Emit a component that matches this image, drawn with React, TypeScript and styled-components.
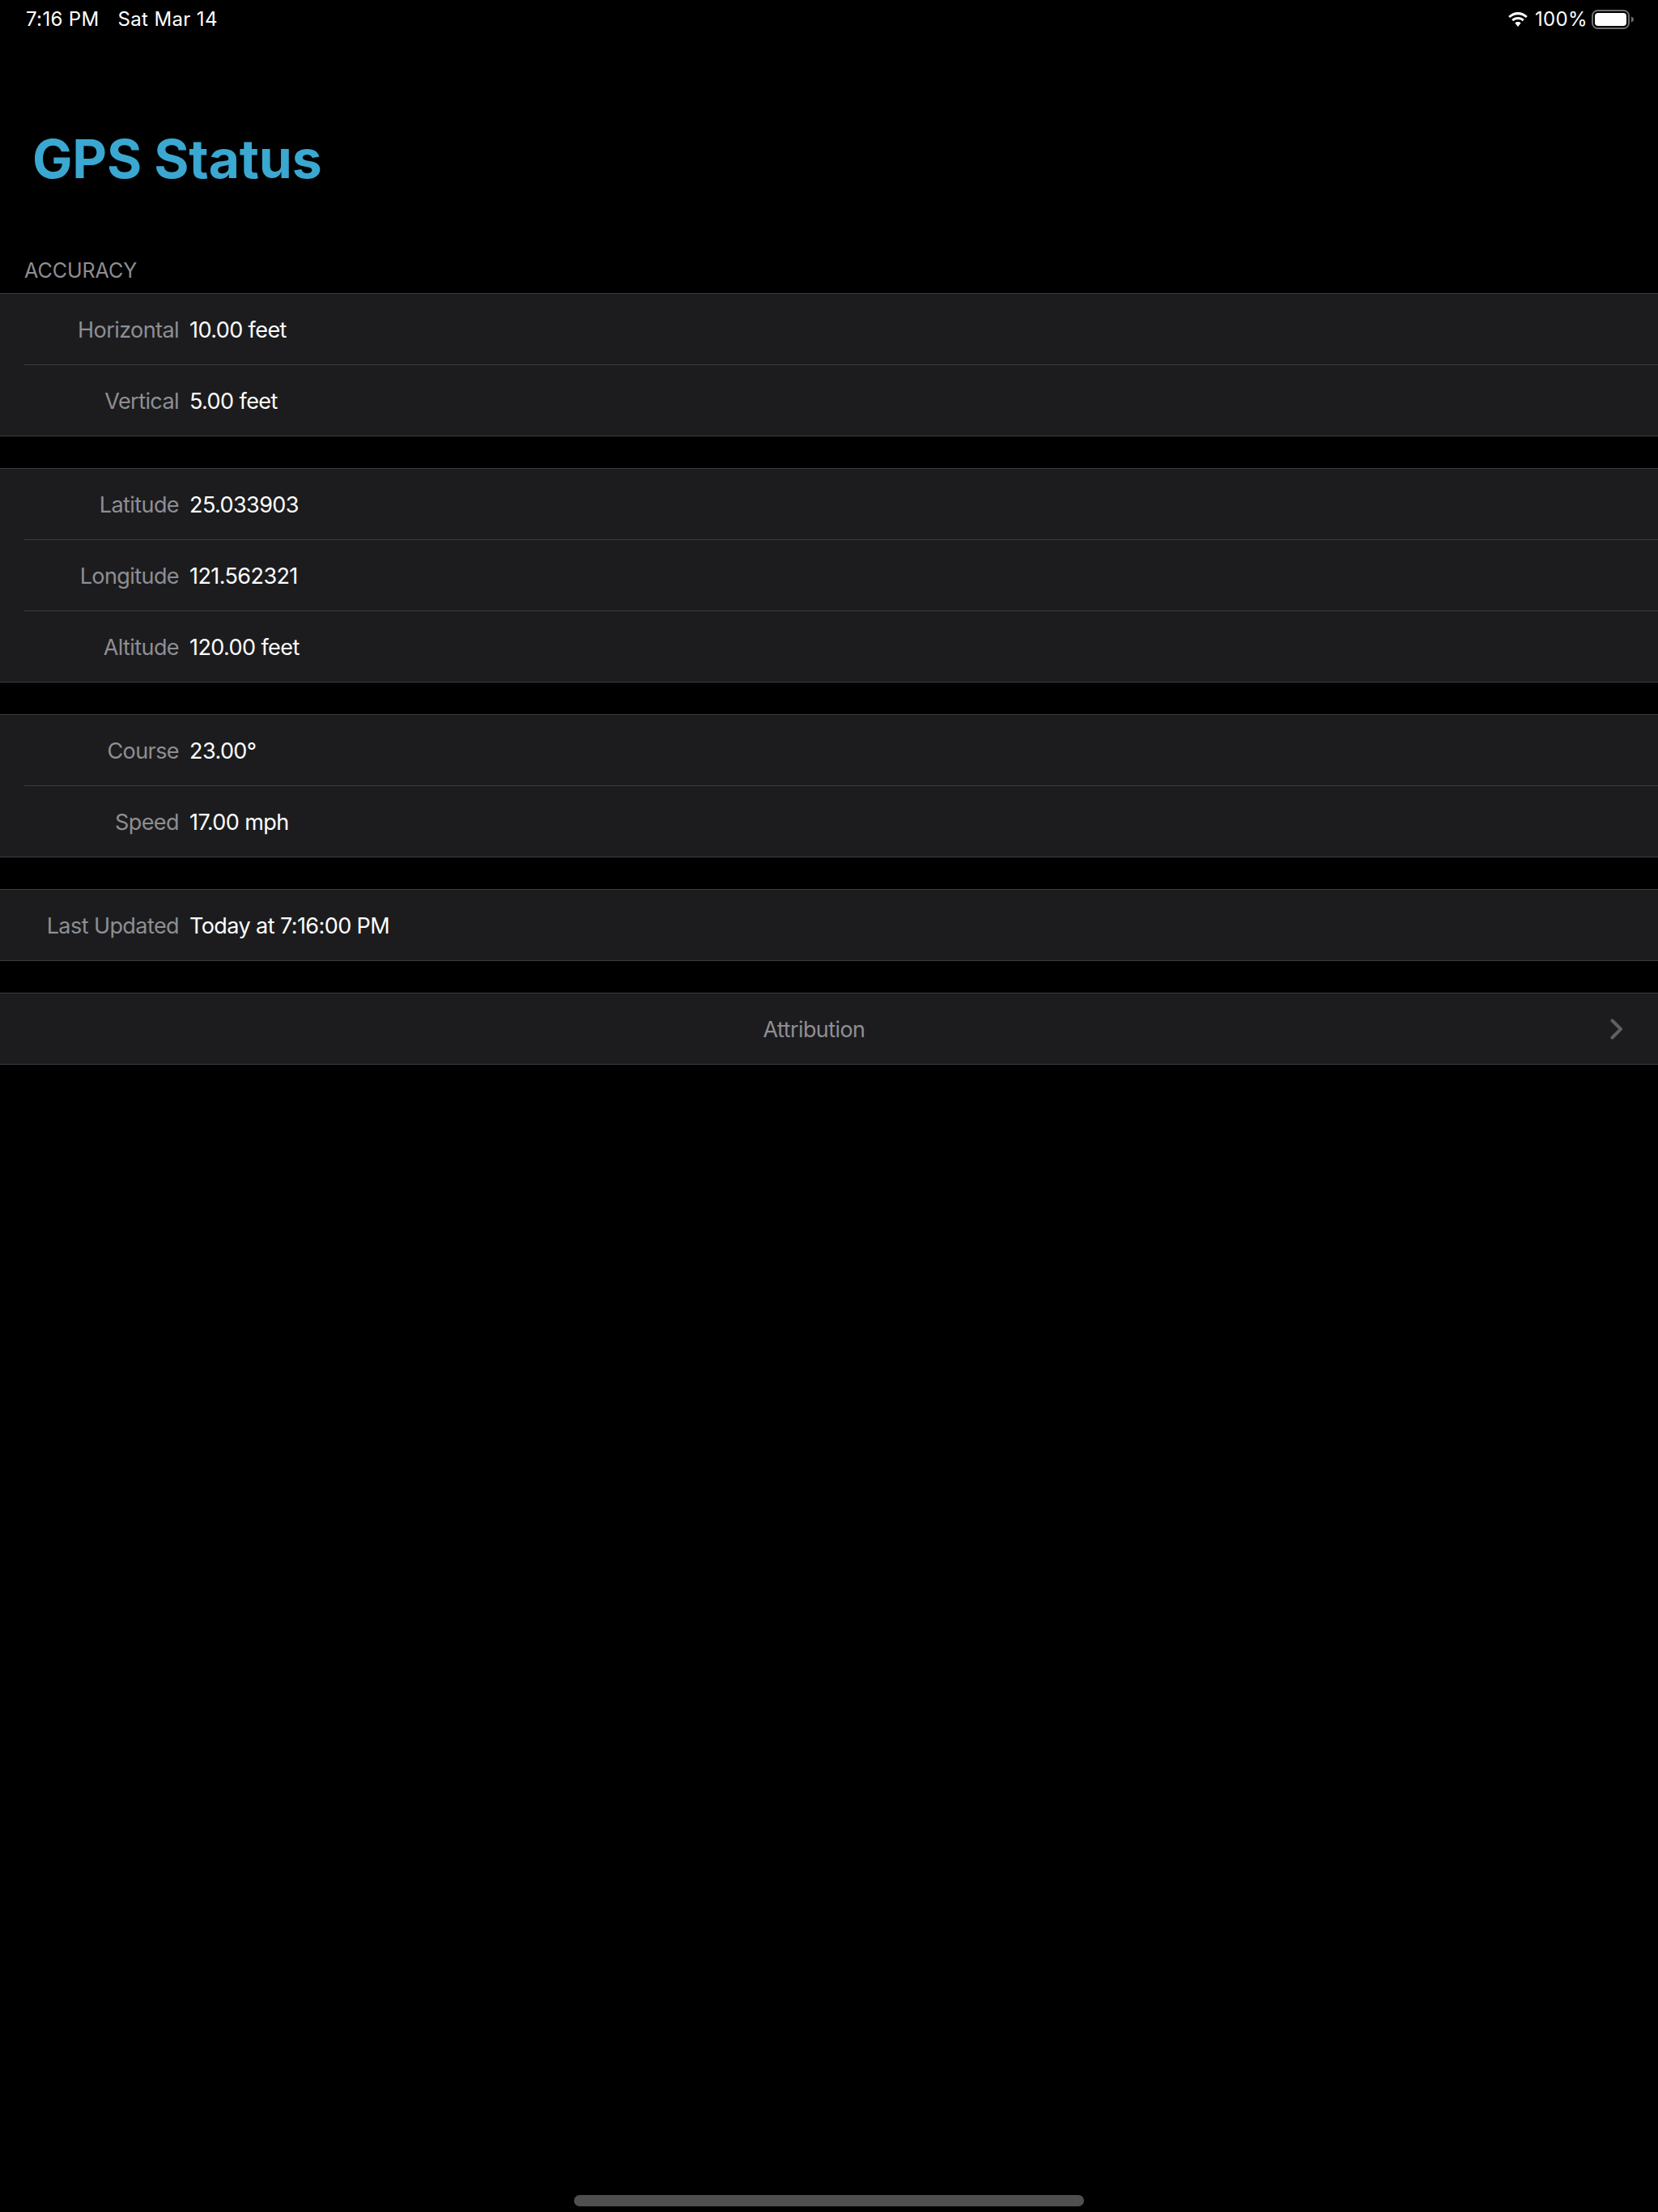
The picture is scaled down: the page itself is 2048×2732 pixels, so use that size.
import { Fragment } from "react";
import styled, { createGlobalStyle } from "styled-components";

const GlobalStyle = createGlobalStyle`
  html, body {
    margin: 0;
    padding: 0;
    background: #000;
  }
  body {
    font-family: Inter, "Liberation Sans", sans-serif;
    -webkit-font-smoothing: antialiased;
  }
`;

const Page = styled.div`
  width: 2048px;
  height: 2732px;
  display: flex;
  flex-direction: column;
  background: #000;
  overflow: hidden;
`;

const StatusBar = styled.div`
  height: 48px;
  padding: 0 30px 0 32px;
  display: flex;
  align-items: center;
  color: #fff;
  font-size: 24px;
  letter-spacing: 0.35px;
  line-height: 48px;
`;

const StatusDate = styled.span`
  margin-left: 23px;
`;

const StatusRight = styled.div`
  margin-left: auto;
  display: flex;
  align-items: center;
  gap: 5px;
`;

const WifiSvg = styled.svg`
  margin-right: 2px;
`;

const Title = styled.h1`
  margin: 0;
  padding: 108px 0 0 40px;
  font-size: 66px;
  line-height: 80px;
  font-weight: 700;
  letter-spacing: -0.2px;
  color: #3aa8d0;
`;

const SectionHeader = styled.div`
  margin-top: 80px;
  padding: 0 30px;
  height: 46px;
  font-size: 25px;
  line-height: 36px;
  color: #8e8e93;
`;

const Group = styled.section`
  background: #1c1c1e;
  border-top: 1px solid #3d3d41;
  border-bottom: 1px solid #3d3d41;
  & + & {
    margin-top: 39px;
  }
`;

const Row = styled.div`
  box-sizing: border-box;
  height: 87px;
  padding-top: 1px;
  display: flex;
  align-items: center;
  font-size: 27px;
  letter-spacing: -0.58px;
`;

const Label = styled.div`
  width: 221px;
  flex: none;
  text-align: right;
  color: #8e8e93;
`;

const Value = styled.div`
  margin-left: 13px;
  color: #fff;
`;

const Separator = styled.div`
  height: 1px;
  margin-left: 30px;
  background: #3d3d41;
`;

const LinkRow = styled(Row)`
  padding-right: 43px;
`;

const LinkText = styled.div`
  flex: 1;
  text-align: center;
  color: #8e8e93;
`;

const Chevron = styled.svg`
  margin-left: -22px;
  flex: none;
`;

const HomeBar = styled.div`
  width: 630px;
  height: 14px;
  margin: auto auto 7px 709px;
  border-radius: 7px;
  background: #4f4f4f;
`;

type Item = { label: string; value: string };

const groups: Item[][] = [
  [
    { label: "Horizontal", value: "10.00 feet" },
    { label: "Vertical", value: "5.00 feet" },
  ],
  [
    { label: "Latitude", value: "25.033903" },
    { label: "Longitude", value: "121.562321" },
    { label: "Altitude", value: "120.00 feet" },
  ],
  [
    { label: "Course", value: "23.00°" },
    { label: "Speed", value: "17.00 mph" },
  ],
  [{ label: "Last Updated", value: "Today at 7:16:00 PM" }],
];

const WifiIcon = () => (
  <WifiSvg width="28" height="20" viewBox="0 0 28 20">
    <path
      d="M14 4.2c3.8 0 7.2 1.5 9.800 3.900l2-2.100C22.500 2.900 18.400 1 14 1S5.500 2.900 2.200 6l2 2.100C6.800 5.700 10.200 4.200 14 4.200z"
      fill="#fff"
    />
    <path
      d="M14 10c2.200 0 4.200.8 5.700 2.200l2-2.100C19.600 8.100 17 7 14 7s-5.600 1.100-7.700 3.100l2 2.100C9.800 10.800 11.800 10 14 10z"
      fill="#fff"
    />
    <path
      d="M14 13c-1.400 0-2.600.5-3.600 1.400L14 19l3.600-4.600C16.600 13.500 15.400 13 14 13z"
      fill="#fff"
    />
  </WifiSvg>
);

const BatteryIcon = () => (
  <svg width="52" height="24" viewBox="0 0 52 24">
    <rect
      x="1"
      y="1"
      width="45"
      height="22"
      rx="6.500"
      fill="none"
      stroke="#6e6e6e"
      strokeWidth="2"
    />
    <rect x="4" y="4" width="39" height="16" rx="4" fill="#fff" />
    <path d="M49 8.500c1.600.5 3 1.700 3 3.500s-1.400 3-3 3.500z" fill="#6e6e6e" />
  </svg>
);

const App = () => {
  return (
    <Page>
      <GlobalStyle />
      <StatusBar>
        <span>7:16 PM</span>
        <StatusDate>Sat Mar 14</StatusDate>
        <StatusRight>
          <WifiIcon />
          <span>100%</span>
          <BatteryIcon />
        </StatusRight>
      </StatusBar>
      <Title>GPS Status</Title>
      <SectionHeader>ACCURACY</SectionHeader>
      {groups.map((items) => (
        <Group key={items[0].label}>
          {items.map((item, i) => (
            <Fragment key={item.label}>
              {i > 0 && <Separator />}
              <Row>
                <Label>{item.label}</Label>
                <Value>{item.value}</Value>
              </Row>
            </Fragment>
          ))}
        </Group>
      ))}
      <Group>
        <LinkRow>
          <LinkText>Attribution</LinkText>
          <Chevron width="16" height="26" viewBox="0 0 16 26">
            <path
              d="M2.500 2.500 13 13 2.500 23.500"
              fill="none"
              stroke="#5f5f63"
              strokeWidth="4"
              strokeLinecap="round"
              strokeLinejoin="round"
            />
          </Chevron>
        </LinkRow>
      </Group>
      <HomeBar />
    </Page>
  );
};

export default App;
